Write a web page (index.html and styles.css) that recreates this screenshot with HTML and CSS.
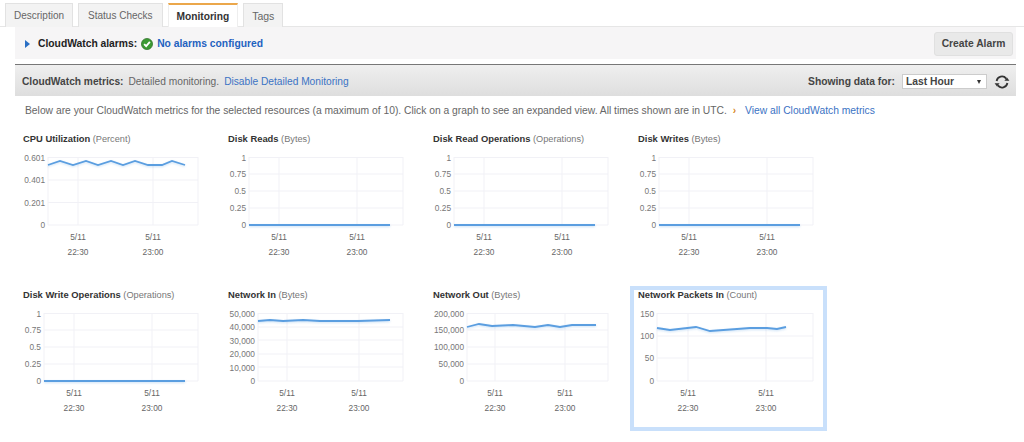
FILE: index.html
```html
<!DOCTYPE html>
<html lang="en">
<head>
    <meta charset="UTF-8">
    <meta name="viewport" content="width=device-width, initial-scale=1.0">
    <title>Monitoring</title>
    <link rel="stylesheet" href="styles.css">
</head>
<body>
    <ul class="tabs">
        <li class="tab">Description</li>
        <li class="tab">Status Checks</li>
        <li class="tab active">Monitoring</li>
        <li class="tab">Tags</li>
    </ul>

    <div class="content">
        <div class="alarm-bar">
            <span class="arrow"></span>
            <b class="alarm-label">CloudWatch alarms:</b>
            <svg class="check-icon" width="12" height="12" viewBox="0 0 13 13"><circle cx="6.5" cy="6.5" r="6" fill="#3c9a33" stroke="#2f6f2a" stroke-width="0.8"/><path d="M3.4 6.6l2.2 2.3 4-4.6" fill="none" stroke="#fff" stroke-width="2"/></svg>
            <a class="alarm-link" href="#">No alarms configured</a>
            <button class="create-btn">Create Alarm</button>
        </div>

        <div class="metrics-bar">
            <b class="metrics-label">CloudWatch metrics:</b>
            <span>Detailed monitoring.</span>
            <a href="#">Disable Detailed Monitoring</a>
            <b class="showing">Showing data for:</b>
            <div class="range-wrap"><select class="range"><option>Last Hour</option></select></div>
            <svg class="refresh" width="16" height="14" viewBox="0 0 16 14"><path d="M2.6 6a5.4 5.4 0 0 1 9.6-2.4M13.4 8a5.4 5.4 0 0 1-9.6 2.4" fill="none" stroke="#333" stroke-width="1.8"/><path d="M15.4 5.8h-5l2.6-3.4zM.6 8.2h5L3 11.6z" fill="#333"/></svg>
        </div>

        <p class="intro">Below are your CloudWatch metrics for the selected resources (a maximum of 10). Click on a graph to see an expanded view. All times shown are in UTC. <span class="chevron">›</span> <a href="#">View all CloudWatch metrics</a></p>

        <div class="charts">
            <div class="chart">
                <div class="chart-title"><b>CPU Utilization</b> (Percent)</div>
                <svg class="plot" width="181" height="112" viewBox="0 0 181 112">
                    <path class="grid" d="M25 8.5H175M25 31H175M25 53.5H175M25 76H175M25 8V76M55 8V76M130 8V76M175 8V76"/>
                    <polyline class="line" points="25,16 37,12 50,16 63,12 75,16 88,12 100,16 112,12 125,16 139,16 149,12 162,16"/>
                    <g class="y-labels"><text x="22" y="12">0.601</text><text x="22" y="34">0.401</text><text x="22" y="57">0.201</text><text x="22" y="79">0</text></g>
                    <g class="x-labels"><text x="55" y="91">5/11</text><text x="55" y="106">22:30</text><text x="130" y="91">5/11</text><text x="130" y="106">23:00</text></g>
                </svg>
            </div>
            <div class="chart">
                <div class="chart-title"><b>Disk Reads</b> (Bytes)</div>
                <svg class="plot" width="181" height="112" viewBox="0 0 181 112">
                    <path class="grid" d="M21 8.5H175M21 25H175M21 42H175M21 59H175M21 76H175M21 8V76M51 8V76M129 8V76M175 8V76"/>
                    <polyline class="line" points="21,76 162,76"/>
                    <g class="y-labels"><text x="18" y="12">1</text><text x="18" y="28">0.75</text><text x="18" y="45">0.5</text><text x="18" y="62">0.25</text><text x="18" y="79">0</text></g>
                    <g class="x-labels"><text x="51" y="91">5/11</text><text x="51" y="106">22:30</text><text x="129" y="91">5/11</text><text x="129" y="106">23:00</text></g>
                </svg>
            </div>
            <div class="chart">
                <div class="chart-title"><b>Disk Read Operations</b> (Operations)</div>
                <svg class="plot" width="181" height="112" viewBox="0 0 181 112">
                    <path class="grid" d="M21 8.5H175M21 25H175M21 42H175M21 59H175M21 76H175M21 8V76M51 8V76M129 8V76M175 8V76"/>
                    <polyline class="line" points="21,76 162,76"/>
                    <g class="y-labels"><text x="18" y="12">1</text><text x="18" y="28">0.75</text><text x="18" y="45">0.5</text><text x="18" y="62">0.25</text><text x="18" y="79">0</text></g>
                    <g class="x-labels"><text x="51" y="91">5/11</text><text x="51" y="106">22:30</text><text x="129" y="91">5/11</text><text x="129" y="106">23:00</text></g>
                </svg>
            </div>
            <div class="chart">
                <div class="chart-title"><b>Disk Writes</b> (Bytes)</div>
                <svg class="plot" width="181" height="112" viewBox="0 0 181 112">
                    <path class="grid" d="M21 8.5H175M21 25H175M21 42H175M21 59H175M21 76H175M21 8V76M51 8V76M129 8V76M175 8V76"/>
                    <polyline class="line" points="21,76 162,76"/>
                    <g class="y-labels"><text x="18" y="12">1</text><text x="18" y="28">0.75</text><text x="18" y="45">0.5</text><text x="18" y="62">0.25</text><text x="18" y="79">0</text></g>
                    <g class="x-labels"><text x="51" y="91">5/11</text><text x="51" y="106">22:30</text><text x="129" y="91">5/11</text><text x="129" y="106">23:00</text></g>
                </svg>
            </div>
            <div class="chart">
                <div class="chart-title"><b>Disk Write Operations</b> (Operations)</div>
                <svg class="plot" width="181" height="112" viewBox="0 0 181 112">
                    <path class="grid" d="M21 8.5H175M21 25H175M21 42H175M21 59H175M21 76H175M21 8V76M51 8V76M129 8V76M175 8V76"/>
                    <polyline class="line" points="21,76 162,76"/>
                    <g class="y-labels"><text x="18" y="12">1</text><text x="18" y="28">0.75</text><text x="18" y="45">0.5</text><text x="18" y="62">0.25</text><text x="18" y="79">0</text></g>
                    <g class="x-labels"><text x="51" y="91">5/11</text><text x="51" y="106">22:30</text><text x="129" y="91">5/11</text><text x="129" y="106">23:00</text></g>
                </svg>
            </div>
            <div class="chart">
                <div class="chart-title"><b>Network In</b> (Bytes)</div>
                <svg class="plot" width="181" height="112" viewBox="0 0 181 112">
                    <path class="grid" d="M30 8.5H175M30 22H175M30 35H175M30 49H175M30 62H175M30 76H175M30 8V76M59 8V76M131 8V76M175 8V76"/>
                    <polyline class="line" points="30,16 42,15 55,16 75,15 92,16 114,16 130,16 162,15"/>
                    <g class="y-labels"><text x="27" y="12">50,000</text><text x="27" y="25">40,000</text><text x="27" y="39">30,000</text><text x="27" y="52">20,000</text><text x="27" y="66">10,000</text><text x="27" y="79">0</text></g>
                    <g class="x-labels"><text x="59" y="91">5/11</text><text x="59" y="106">22:30</text><text x="131" y="91">5/11</text><text x="131" y="106">23:00</text></g>
                </svg>
            </div>
            <div class="chart">
                <div class="chart-title"><b>Network Out</b> (Bytes)</div>
                <svg class="plot" width="181" height="112" viewBox="0 0 181 112">
                    <path class="grid" d="M34 8.5H175M34 25H175M34 42H175M34 59H175M34 76H175M34 8V76M62 8V76M132 8V76M175 8V76"/>
                    <polyline class="line" points="34,22 46,19 59,21 80,20 102,22 115,20 127,22 139,20 163,20"/>
                    <g class="y-labels"><text x="31" y="12">200,000</text><text x="31" y="28">150,000</text><text x="31" y="45">100,000</text><text x="31" y="62">50,000</text><text x="31" y="79">0</text></g>
                    <g class="x-labels"><text x="62" y="91">5/11</text><text x="62" y="106">22:30</text><text x="132" y="91">5/11</text><text x="132" y="106">23:00</text></g>
                </svg>
            </div>
            <div class="chart selected">
                <div class="chart-title"><b>Network Packets In</b> (Count)</div>
                <svg class="plot" width="181" height="112" viewBox="0 0 181 112">
                    <path class="grid" d="M19 8.5H175M19 31H175M19 53H175M19 76H175M19 8V76M50 8V76M128 8V76M175 8V76"/>
                    <polyline class="line" points="19,23 32,25 58,22 72,26 99,24 112,23 129,23 139,24 148,22"/>
                    <g class="y-labels"><text x="16" y="12">150</text><text x="16" y="34">100</text><text x="16" y="56">50</text><text x="16" y="79">0</text></g>
                    <g class="x-labels"><text x="50" y="91">5/11</text><text x="50" y="106">22:30</text><text x="128" y="91">5/11</text><text x="128" y="106">23:00</text></g>
                </svg>
            </div>
        </div>
    </div>
</body>
</html>
```

FILE: styles.css
```css
:root {
    --texto: #666;
    --oscuro: #333;
    --enlace: #3b73c4;
    --linea: #5b9ee0;
}

html, body {
    overflow: hidden;
}

body {
    margin: 0;
    background: #fff;
    font-family: "Liberation Sans", Arial, sans-serif;
    font-size: 10.3px;
    color: var(--texto);
}

a {
    color: var(--enlace);
    text-decoration: none;
}

.tabs {
    list-style: none;
    margin: 0;
    padding: 3px 0 0 5px;
    height: 23px;
    display: flex;
    border-bottom: 1px solid #e6e6e6;
}

.tab {
    box-sizing: border-box;
    height: 24px;
    padding: 0 8px;
    margin-right: 5px;
    display: flex;
    align-items: center;
    font-size: 10px;
    color: #666;
    background: #f3f3f3;
    border: 1px solid #e2e2e2;
    border-bottom: none;
}

.tab:nth-child(2) {
    padding: 0 9px;
}

.tab.active {
    font-size: 10.2px;
    color: #333;
    font-weight: bold;
    background: #fff;
    border-color: #eee;
    border-top: 2px solid #eba74b;
}

.tab:last-child {
    font-size: 10.5px;
}

.content {
    margin-left: 15px;
    width: 1001px;
}

.alarm-bar {
    height: 31px;
    padding: 1px 3px 0 10px;
    display: flex;
    align-items: center;
    background: #f6f5f6;
}

.arrow {
    width: 0;
    height: 0;
    margin-right: 8px;
    border-left: 5px solid #2a6fc4;
    border-top: 4px solid transparent;
    border-bottom: 4px solid transparent;
}

.alarm-label {
    color: #222;
}

.check-icon {
    margin: 0 4px;
}

.alarm-link {
    color: #1e62c0;
    font-weight: bold;
}

.create-btn {
    box-sizing: border-box;
    width: 79px;
    height: 24px;
    margin-left: auto;
    padding: 0;
    font-family: inherit;
    font-size: inherit;
    font-weight: bold;
    color: #444;
    background: #e9e9e9;
    border: 1px solid #e0e0e0;
    border-radius: 3px;
}

.metrics-bar {
    box-sizing: border-box;
    height: 32px;
    margin-top: 5px;
    padding: 2px 6px 0 7px;
    display: flex;
    align-items: center;
    gap: 5px;
    font-size: 10.2px;
    background: linear-gradient(#efefef, #dedede);
    border-top: 1px solid #777;
}

.metrics-label {
    color: #444;
}

.showing {
    margin-left: auto;
    font-size: 10.3px;
    color: #444;
}

.range-wrap {
    position: relative;
    margin-left: 2px;
}

.range-wrap::after {
    content: "";
    position: absolute;
    top: 6px;
    right: 6px;
    border-top: 4px solid #333;
    border-left: 2.5px solid transparent;
    border-right: 2.5px solid transparent;
}

.range {
    display: block;
    box-sizing: border-box;
    width: 85px;
    height: 15px;
    padding: 0 0 0 3px;
    appearance: none;
    font-family: inherit;
    font-size: 10.3px;
    font-weight: bold;
    color: #444;
    background: #fff;
    border: 1px solid #ccc;
    border-radius: 0;
}

.refresh {
    margin-left: 2px;
}

.intro {
    margin: 8px 0 0 10px;
    line-height: 14px;
}

.chevron {
    margin: 0 6px 0 3px;
    color: #d98a1f;
    font-weight: bold;
}

.charts {
    margin-top: 12px;
    display: grid;
    grid-template-columns: repeat(4, 197px);
    gap: 11px 8px;
}

.chart {
    box-sizing: border-box;
    height: 145px;
    padding: 0 4px;
    border: 4px solid transparent;
}

.chart.selected {
    border-color: #c9e0fb;
}

.chart-title {
    height: 15px;
    line-height: 10px;
    font-size: 9.2px;
    white-space: nowrap;
    color: #777;
}

.chart-title b {
    font-size: 9.4px;
    color: #333;
}

.plot {
    display: block;
}

.grid {
    fill: none;
    stroke: #f1f1f6;
    stroke-width: 1;
}

.line {
    fill: none;
    stroke: var(--linea);
    stroke-width: 1.8;
    filter: drop-shadow(0 1px 1px rgba(91, 158, 224, 0.3));
}

.y-labels text {
    font-size: 8.3px;
    fill: #777;
    text-anchor: end;
}

.x-labels text {
    font-size: 8.3px;
    fill: #666;
    text-anchor: middle;
}
```
